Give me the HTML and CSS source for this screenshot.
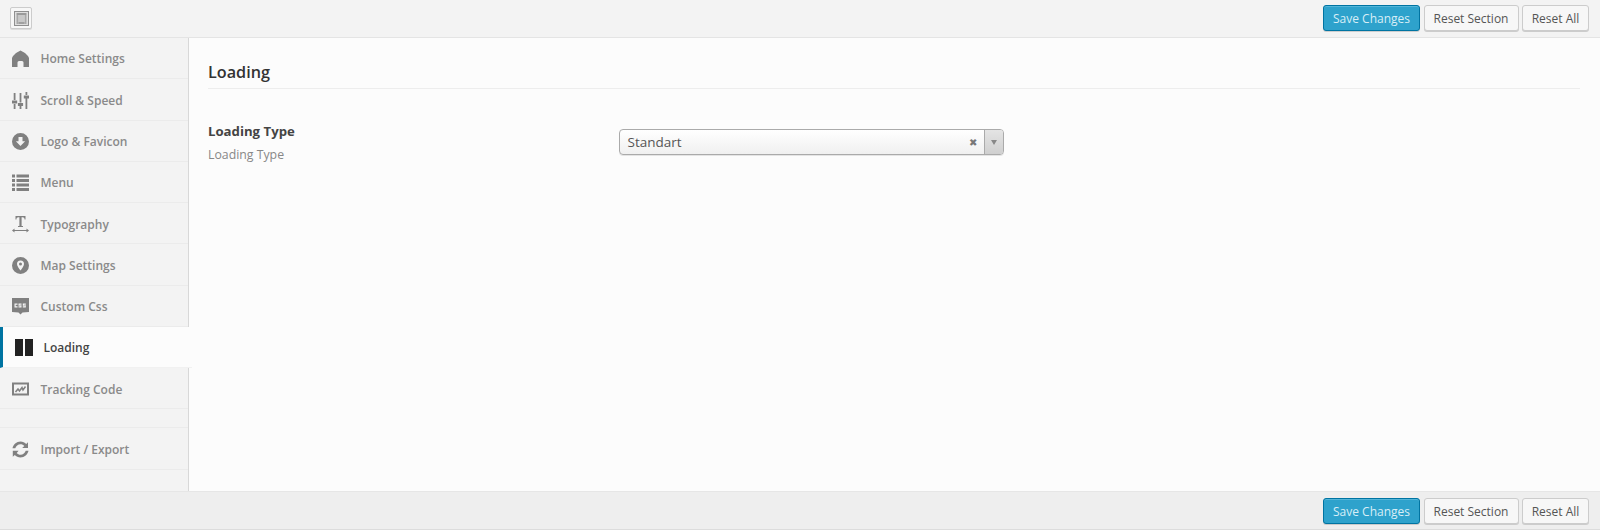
FILE: index.html
```html
<!DOCTYPE html>
<html lang="en">
<head>
  <meta charset="UTF-8">
  <title>Theme Options</title>
  <link rel="stylesheet" href="styles.css">
</head>
<body>
  <div class="page">
    <header class="bar bar-top">
      <div class="logo-box">
        <svg width="15" height="15" viewBox="0 0 15 15"><rect x="0.500" y="0.500" width="14" height="14" fill="#dedede" stroke="#8f8f8f"/><rect x="2.500" y="2" width="10" height="2" fill="#9a9a9a"/><rect x="2.500" y="4" width="2" height="9" fill="#a8a8a8"/><rect x="10.500" y="4" width="2" height="9" fill="#a8a8a8"/><rect x="4.500" y="4" width="6" height="7" fill="#c8c8c8"/><rect x="4.500" y="11" width="6" height="2" fill="#a0a0a0"/></svg>
      </div>
      <div class="actions">
        <button class="btn btn-primary">Save Changes</button>
        <button class="btn btn-section">Reset Section</button>
        <button class="btn btn-all">Reset All</button>
      </div>
    </header>

    <div class="main">
      <nav class="sidebar">
        <a class="item">
          <svg class="icon" viewBox="0 0 17 17"><path d="M8.500 0.500L13 3L16 6L17 8V17H11.500V12.500A1.500 1.500 0 0 0 10 11H7A1.500 1.500 0 0 0 5.500 12.500V17H0V8L1 6L4 3Z"/></svg>
          Home Settings
        </a>
        <a class="item">
          <svg class="icon" viewBox="0 0 17 17"><path d="M1.700 1h1.800v7H1.700zM1.700 12h1.800v5H1.700zM0 8.500h5.200v3H0zM7.600 1h1.800v9.500H7.600zM7.600 14h1.800v3H7.600zM5.900 11h5.200v3H5.900zM13.500 0h1.800v3h-1.800zM13.500 6.500h1.800V17h-1.800zM11.800 3.500H17v3h-5.200z"/></svg>
          Scroll &amp; Speed
        </a>
        <a class="item">
          <svg class="icon" viewBox="0 0 17 17"><path fill-rule="evenodd" d="M8.500 0a8.500 8.500 0 1 0 0 17a8.500 8.500 0 0 0 0-17zM6.500 4h4v4.200h2.600L8.500 13L3.900 8.200h2.600z"/></svg>
          Logo &amp; Favicon
        </a>
        <a class="item">
          <svg class="icon" viewBox="0 0 17 17"><path d="M0 0.500h3v3H0zM4.500 0.500H17v3H4.500zM0 5h3v3H0zM4.500 5H17v3H4.500zM0 9.500h3v3H0zM4.500 9.500H17v3H4.500zM0 14h3v3H0zM4.500 14H17v3H4.500z"/></svg>
          Menu
        </a>
        <a class="item">
          <svg class="icon" viewBox="0 0 17 17"><path d="M3.500 0H13.500V3.500H12.600C12.500 2 12 1.300 10.500 1.300H9.600V10H11V11H6V10H7.400V1.300H6.500C5 1.300 4.500 2 4.400 3.500H3.500zM0 14.500L2.500 12.500V13.900H14.500V12.500L17 14.500L14.500 16.500V15.100H2.500V16.500z"/></svg>
          Typography
        </a>
        <a class="item">
          <svg class="icon" viewBox="0 0 17 17"><path fill-rule="evenodd" d="M8.500 0a8.500 8.500 0 1 0 0 17a8.500 8.500 0 0 0 0-17zM8.500 3.500a3.500 3.500 0 0 1 3.500 3.500c0 2-2 4.500-3.500 6.500C7 11.500 5 9 5 7a3.500 3.500 0 0 1 3.500-3.500zM8.500 5.500a1.500 1.500 0 1 0 0 3a1.500 1.500 0 0 0 0-3z"/></svg>
          Map Settings
        </a>
        <a class="item">
          <svg class="icon" viewBox="0 0 17 17"><path d="M0 0H17V14L10.500 14.500L8.500 16.500L6.500 14.500L0 14Z"/><path class="css-mark" d="M2.500 5.500h3v1.200h-1.800v1.600h1.800v1.200h-3zM6.500 5.500h3v1.200h-1.800v.6h1.800v2.200h-3v-1.200h1.800v-.6h-1.800zM10.800 5.500h3v1.200h-1.800v.6h1.800v2.200h-3v-1.200h1.800v-.6h-1.800z"/></svg>
          Custom Css
        </a>
        <a class="item item-active">
          <svg class="icon icon-active" viewBox="0 0 18 17"><path d="M0 0h8v17H0zM10 0h8v17h-8z"/></svg>
          Loading
        </a>
        <a class="item">
          <svg class="icon" viewBox="0 0 17 17"><path fill-rule="evenodd" d="M0 1.500H17V14.500H0zM2 3.500V12.500H15V3.500z"/><path class="line" d="M3.500 11L6 8L7.500 10L10 6.500L11 9L13.500 5.500"/></svg>
          Tracking Code
        </a>
        <div class="divider"></div>
        <a class="item">
          <svg class="icon" viewBox="0 0 17 17"><path d="M8.500 0.500C10.800 0.500 12.800 1.500 14.200 3L16 1.200V7H10.200L12.300 4.900C11.300 3.800 10 3.200 8.500 3.200C6 3.200 3.900 5 3.300 7.300H0.500C1.100 3.500 4.500 0.500 8.500 0.500zM0.800 9.800H6.600L4.700 12C5.700 13.100 7 13.800 8.500 13.800C11 13.800 13.100 12 13.700 9.800H16.500C15.800 13.500 12.500 16.500 8.500 16.500C6.200 16.500 4.200 15.500 2.800 14L0.800 15.800z"/></svg>
          Import / Export
        </a>
      </nav>

      <section class="content">
        <h2 class="section-title">Loading</h2>
        <div class="field">
          <div class="field-label">
            <div class="field-name">Loading Type</div>
            <div class="field-desc">Loading Type</div>
          </div>
          <div class="select">
            <span class="select-value">Standart</span>
            <span class="select-clear">&#10006;</span>
            <span class="select-arrow"><i class="caret"></i></span>
          </div>
        </div>
      </section>
    </div>

    <footer class="bar bar-bottom">
      <div class="actions">
        <button class="btn btn-primary">Save Changes</button>
        <button class="btn btn-section">Reset Section</button>
        <button class="btn btn-all">Reset All</button>
      </div>
    </footer>
  </div>
</body>
</html>
```

FILE: styles.css
```css
html, body {
  margin: 0;
  padding: 0;
  background: #fff;
}
body {
  font-family: "Open Sans", "Liberation Sans", sans-serif;
  font-size: 13px;
  color: #555;
}
.page {
  display: flex;
  flex-direction: column;
  height: 530px;
  overflow: hidden;
}
.bar {
  display: flex;
  align-items: center;
  background: #f3f3f3;
  padding: 0 11px 0 10px;
  flex: none;
}
.bar-top {
  box-sizing: border-box;
  height: 38px;
  padding-bottom: 1px;
  border-bottom: 1px solid #e4e4e4;
}
.bar-bottom {
  height: 39px;
  box-sizing: border-box;
  padding-top: 1px;
  border-top: 1px solid #e6e6e6;
  border-bottom: 1px solid #dcdcdc;
  background: #eeeeee;
}
.logo-box {
  width: 20px;
  height: 20px;
  display: flex;
  align-items: center;
  justify-content: center;
  background: #f7f7f7;
  border: 1px solid #ccc;
  border-radius: 2px;
  box-shadow: 0 1px 0 #ddd;
}
.actions {
  margin-left: auto;
  display: flex;
  gap: 3.500px;
}
.btn {
  height: 26px;
  padding: 1px 0 0;
  font-family: inherit;
  font-size: 12px;
  line-height: 24px;
  color: #555;
  background: #f7f7f7;
  border: 1px solid #ccc;
  border-radius: 3px;
  box-shadow: 0 1px 0 #ccc;
}
.btn-primary {
  width: 97px;
  color: #d8eef7;
  background: #2ea2cc;
  border-color: #0074a2;
  box-shadow: inset 0 1px 0 rgba(120, 200, 230, .5), 0 1px 0 rgba(0, 0, 0, .15);
}
.btn-section {
  width: 95px;
}
.btn-all {
  width: 67px;
}
.main {
  flex: 1;
  display: flex;
  min-height: 0;
}
.sidebar {
  width: 188px;
  flex: none;
  background: #f3f3f3;
  border-right: 1px solid #d8d8d8;
}
.item {
  display: flex;
  align-items: center;
  gap: 11.500px;
  height: 41.250px;
  box-sizing: border-box;
  padding: 2px 0 0 12px;
  border-bottom: 1px solid #ebebeb;
  font-size: 12px;
  font-weight: 600;
  color: #8a8a8a;
}
.item:first-child {
  padding-top: 0;
}
.item-active {
  width: 192px;
  position: relative;
  background: #fcfcfc;
  border-left: 3px solid #0074a2;
  border-bottom-color: #f1f1f1;
  color: #444;
  gap: 10.500px;
}
.icon {
  width: 17px;
  height: 17px;
  flex: none;
  fill: #808080;
}
.icon-active {
  width: 18px;
  fill: #222;
}
.css-mark {
  fill: #f3f3f3;
}
.line {
  fill: none;
  stroke: #808080;
  stroke-width: 1.500;
}
.divider {
  height: 19px;
  box-sizing: border-box;
  border-bottom: 1px solid #ebebeb;
}
.content {
  flex: 1;
  background: #fcfcfc;
  padding: 22px 20px 0 19px;
  min-width: 0;
}
.section-title {
  margin: 0;
  height: 28px;
  font-size: 16.200px;
  font-weight: 600;
  line-height: 24px;
  color: #333;
  border-bottom: 1px solid #ededed;
}
.field {
  display: flex;
  margin-top: 33px;
}
.field-label {
  width: 411px;
  flex: none;
  margin-top: -1px;
}
.field-name {
  font-size: 13.200px;
  font-weight: 700;
  line-height: 20px;
  color: #444;
}
.field-desc {
  margin-top: 4px;
  font-size: 12.300px;
  line-height: 20px;
  color: #888;
}
.select {
  width: 385px;
  height: 26px;
  margin-top: 7px;
  box-sizing: border-box;
  display: flex;
  align-items: center;
  background: linear-gradient(#ffffff, #f0f0f0);
  border: 1px solid #aaa;
  border-radius: 4px;
  box-shadow: 0 1px 0 #e4e4e4;
}
.select-value {
  flex: 1;
  padding-left: 7.500px;
  font-size: 13.500px;
  color: #555;
}
.select-clear {
  width: 12px;
  margin-right: 5px;
  font-size: 10px;
  color: #777;
  text-align: center;
}
.select-arrow {
  width: 18px;
  height: 24px;
  display: flex;
  align-items: center;
  justify-content: center;
  background: linear-gradient(#e4e4e4, #cfcfcf);
  border-left: 1px solid #aaa;
  border-radius: 0 3px 3px 0;
}
.caret {
  width: 0;
  height: 0;
  border-left: 3px solid transparent;
  border-right: 3px solid transparent;
  border-top: 5px solid #888;
}
```
